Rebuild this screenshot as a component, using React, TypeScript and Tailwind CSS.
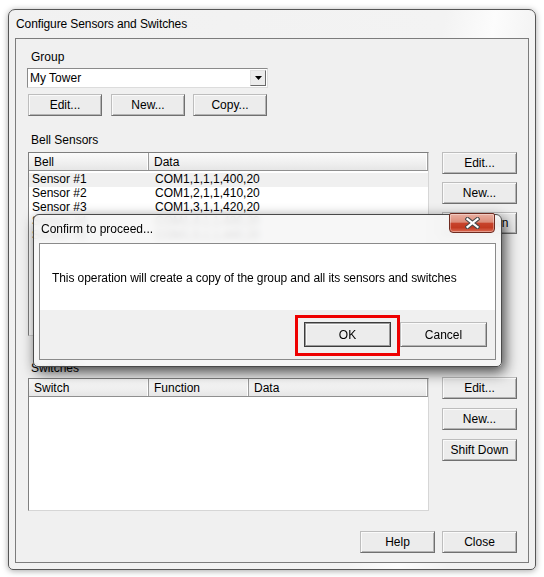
import React from "react";

const btn =
  "flex items-center justify-center bg-[#ececec] border border-t-[#bdbdbd] border-l-[#bdbdbd] border-r-[#707070] border-b-[#707070] shadow-[inset_1px_1px_0_#fafafa,inset_-1px_-1px_0_#b4b4b4] text-black leading-none";

function Btn({ label, w, h = 22, cls = "" }: { label: string; w: number; h?: number; cls?: string }) {
  return (
    <div className={`${btn} ${cls}`} style={{ width: w, height: h }}>
      {label}
    </div>
  );
}

function ListView({
  cols,
  rows,
  height,
}: {
  cols: { label: string; w?: number }[];
  rows: { cells: string[]; sel?: boolean }[];
  height: number;
}) {
  return (
    <div
      className="w-[401px] border border-t-[#7f7f7f] border-l-[#7f7f7f] border-r-[#d6d6d6] border-b-[#d6d6d6] bg-white flex flex-col overflow-hidden"
      style={{ height }}
    >
      <div className="flex h-[18px] shrink-0 border-b border-[#8f8f8f] bg-[linear-gradient(#fbfbfb,#efefef_60%,#e6e6e6)]">
        {cols.map((c, i) => (
          <div
            key={i}
            className={`h-full flex items-center pl-[5px] border-r border-[#9c9c9c] shadow-[inset_-1px_0_0_#ffffff] ${c.w ? "" : "flex-1"}`}
            style={c.w ? { width: c.w } : undefined}
          >
            {c.label}
          </div>
        ))}
      </div>
      <div className="pt-[2px] flex flex-col">
        {rows.map((r, i) => (
          <div key={i} className={`flex h-[14px] leading-[13px] ${r.sel ? "bg-[#f0f0f0]" : ""}`}>
            {r.cells.map((c, j) => (
              <div
                key={j}
                className={j === 0 ? "pl-[3px]" : "pl-[6px] flex-1"}
                style={j === 0 ? { width: cols[0].w } : undefined}
              >
                {c}
              </div>
            ))}
          </div>
        ))}
      </div>
    </div>
  );
}

export default function App() {
  return (
    <div className="relative w-[544px] h-[577px] overflow-hidden bg-white font-['Liberation_Sans',Arial,sans-serif] text-[12px] text-black">
      <div className="pt-[9px] pl-[8px]">
        <div className="w-[528px] h-[561px] flex flex-col rounded-t-[7px] rounded-b-[5px] border border-[#565656] bg-[linear-gradient(100deg,#f1f1f1_0%,#f3f3f3_70%,#fcfcfc_78%,#f2f2f2_86%,#f0f0f0_100%)] shadow-[0_1px_6px_rgba(0,0,0,0.35)] px-[6px] pb-[6px]">
          <div className="h-[28px] shrink-0 flex items-center pl-[1px] pb-[1px] tracking-[-0.1px]">Configure Sensors and Switches</div>
          <div className="h-[525px] shrink-0 border border-[#7c7c7c] bg-[#f0f0f0] flex flex-col">
            <div className="ml-[15px] mt-[10px] leading-[16px]">Group</div>
            <div className="ml-[11px] mt-[3px] w-[241px] h-[20px] relative border border-t-[#8a8a8a] border-l-[#8a8a8a] border-r-[#dcdcdc] border-b-[#dcdcdc] bg-white flex items-center pl-[2px]">
              My Tower
              <div className="absolute right-[1px] top-[1px] w-[16px] h-[16px] bg-[#ececec] border border-t-[#e0e0e0] border-l-[#e0e0e0] border-r-[#6a6a6a] border-b-[#6a6a6a] flex items-center justify-center">
                <svg width="7" height="4" viewBox="0 0 7 4">
                  <path d="M0 0H7L3.5 4Z" fill="#000" />
                </svg>
              </div>
            </div>
            <div className="ml-[12px] mt-[6px] flex">
              <Btn label="Edit..." w={74} />
              <Btn label="New..." w={74} cls="ml-[9px]" />
              <Btn label="Copy..." w={74} cls="ml-[8px]" />
            </div>
            <div className="ml-[15px] mt-[16px] leading-[16px]">Bell Sensors</div>
            <div className="ml-[12px] mt-[4px] flex items-start">
              <ListView
                height={184}
                cols={[{ label: "Bell", w: 120 }, { label: "Data" }]}
                rows={[
                  { cells: ["Sensor #1", "COM1,1,1,1,400,20"], sel: true },
                  { cells: ["Sensor #2", "COM1,2,1,1,410,20"] },
                  { cells: ["Sensor #3", "COM1,3,1,1,420,20"] },
                  { cells: ["Sensor #4", "COM1,4,1,1,430,20"] },
                  { cells: ["Sensor #5", "COM1,5,1,1,440,20"] },
                ]}
              />
              <div className="ml-[13px] flex flex-col gap-[8px]">
                <Btn label="Edit..." w={75} />
                <Btn label="New..." w={75} />
                <Btn label="Shift Down" w={75} />
              </div>
            </div>
            <div className="ml-[15px] mt-[24px] leading-[16px]">Switches</div>
            <div className="ml-[12px] mt-[1px] flex items-start">
              <div className="mt-[1px]">
                <ListView
                  height={133}
                  cols={[{ label: "Switch", w: 120 }, { label: "Function", w: 100 }, { label: "Data" }]}
                  rows={[]}
                />
              </div>
              <div className="ml-[13px] flex flex-col gap-[9px]">
                <Btn label="Edit..." w={75} />
                <Btn label="New..." w={75} />
                <Btn label="Shift Down" w={75} />
              </div>
            </div>
            <div className="mt-[20px] flex justify-end pr-[11px] gap-[7px]">
              <Btn label="Help" w={75} />
              <Btn label="Close" w={75} />
            </div>
          </div>
        </div>
      </div>

      {/* Confirm dialog */}
      <div className="absolute left-[33px] top-[214px] w-[469px] h-[153px] rounded-t-[6px] rounded-b-[5px] border border-[#4a4a4a] bg-[rgba(246,246,246,0.88)] backdrop-blur-[3px] shadow-[3px_5px_14px_rgba(0,0,0,0.72)] px-[5px] pb-[6px] flex flex-col">
        <div className="h-[28px] shrink-0 flex items-center pl-[2px]">Confirm to proceed...</div>
        <div className="h-[117px] shrink-0 border border-[#8a8a8a] flex flex-col">
          <div className="h-[66px] bg-white pl-[12px] pt-[26px] leading-[16px] tracking-[-0.08px]">
            This operation will create a copy of the group and all its sensors and switches
          </div>
          <div className="h-[49px] bg-[#f0f0f0] flex justify-end items-start pr-[8px] pt-[12px] gap-[9px]">
            <div className="relative">
              <div className="w-[87px] h-[25px] flex items-center justify-center bg-[#ececec] border border-[#3c3c3c] shadow-[inset_0_0_0_1px_#9a9a9a,inset_2px_2px_0_#fafafa]">
                OK
              </div>
              <div className="absolute left-[-9px] top-[-7px] w-[105px] h-[41px] border-[3px] border-[#ee0000]" />
            </div>
            <Btn label="Cancel" w={87} h={25} />
          </div>
        </div>
        <div className="absolute left-[415px] top-[-2px] w-[46px] h-[20px] rounded-b-[4px] rounded-t-[2px] border border-[#6e2b20] bg-[linear-gradient(#eab0a2_0%,#dc8c79_45%,#c7432b_52%,#c23a21_75%,#dc6a52_100%)] shadow-[inset_0_0_0_1px_rgba(255,255,255,0.35)] flex items-center justify-center">
          <svg width="15" height="12" viewBox="0 0 15 12">
            <path d="M2.5 2L12.5 10M12.5 2L2.5 10" stroke="#4a4a4a" strokeWidth="4.2" strokeLinecap="square" />
            <path d="M2.5 2L12.5 10M12.5 2L2.5 10" stroke="#ffffff" strokeWidth="2.2" strokeLinecap="square" />
          </svg>
        </div>
      </div>
    </div>
  );
}
